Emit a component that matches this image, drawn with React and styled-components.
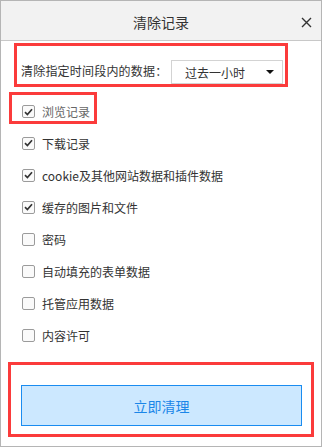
import styled, { createGlobalStyle } from 'styled-components';

const GlobalStyle = createGlobalStyle`
  html, body {
    margin: 0;
    padding: 0;
    background: #fff;
  }
  body {
    font-family: 'Noto Sans CJK SC', 'Noto Sans', sans-serif;
    color: #333;
  }
`;

const items = [
  { label: '浏览记录', checked: true, marked: true },
  { label: '下载记录', checked: true },
  { label: 'cookie及其他网站数据和插件数据', checked: true },
  { label: '缓存的图片和文件', checked: true },
  { label: '密码', checked: false },
  { label: '自动填充的表单数据', checked: false },
  { label: '托管应用数据', checked: false },
  { label: '内容许可', checked: false },
];

const CheckMark = () => (
  <svg width='9' height='8' viewBox='0 0 9 8'>
    <path d='M1 4.2 L3.4 6.5 L8 1.3' fill='none' stroke='#333' strokeWidth='1.7' />
  </svg>
);

const Option = ({ label, checked, marked }) => (
  <Row>
    <Box>{checked && <CheckMark />}</Box>
    <Label $muted={marked}>{label}</Label>
  </Row>
);

const App = () => {
  const marked = items.filter((item) => item.marked);
  const rest = items.filter((item) => !item.marked);

  return (
    <>
      <GlobalStyle />
      <Dialog>
        <Header>
          <Title>清除记录</Title>
          <Close aria-label='close'>
            <svg width='11' height='11' viewBox='0 0 11 11'>
              <path d='M1 1 L10 10 M10 1 L1 10' stroke='#333' strokeWidth='1.4' />
            </svg>
          </Close>
        </Header>

        <RangeBox>
          <RangeLabel>清除指定时间段内的数据：</RangeLabel>
          <Select>
            <span>过去一小时</span>
            <Arrow />
          </Select>
        </RangeBox>

        {marked.map((item) => (
          <MarkedRow key={item.label}>
            <Option {...item} />
          </MarkedRow>
        ))}

        <List>
          {rest.map((item) => (
            <Option key={item.label} {...item} />
          ))}
        </List>

        <Footer>
          <ClearButton>立即清理</ClearButton>
        </Footer>
      </Dialog>
    </>
  );
};

const Dialog = styled.div`
  width: 322px;
  height: 447px;
  box-sizing: border-box;
  border: 1px solid #b5b5b5;
  display: flex;
  flex-direction: column;
  background: #fff;
`;

const Header = styled.div`
  height: 40px;
  box-sizing: border-box;
  background: #f2f2f2;
  border-bottom: 1px solid #c8c8c8;
  display: flex;
  align-items: center;
  justify-content: center;
  position: relative;
`;

const Title = styled.div`
  font-size: 14px;
  color: #333;
  padding-top: 3px;
`;

const Close = styled.div`
  position: absolute;
  right: 9px;
  top: 16px;
  width: 11px;
  height: 11px;
  display: flex;
`;

const RangeBox = styled.div`
  margin: 2px 0 0 13px;
  width: 274px;
  height: 44px;
  box-sizing: border-box;
  border: 3px solid #fb3b3b;
  display: flex;
  align-items: flex-end;
  justify-content: space-between;
  padding: 0 2px 0 4px;
`;

const RangeLabel = styled.span`
  font-size: 12px;
  color: #333;
  line-height: 24px;
  margin-bottom: 1px;
  letter-spacing: 0.2px;
`;

const Select = styled.div`
  width: 112px;
  height: 24px;
  box-sizing: border-box;
  border: 1px solid #d3d3d3;
  background: #fff;
  display: flex;
  align-items: center;
  justify-content: space-between;
  padding: 0 8px 0 13px;
  font-size: 12px;
  color: #333;
`;

const Arrow = styled.span`
  width: 0;
  height: 0;
  border-left: 4px solid transparent;
  border-right: 4px solid transparent;
  border-top: 4px solid #111;
`;

const MarkedRow = styled.div`
  margin: 5px 0 0 8px;
  width: 88px;
  height: 32px;
  box-sizing: border-box;
  border: 3px solid #fb3b3b;
  padding: 7px 0 0 10px;
  display: flex;
`;

const List = styled.div`
  margin-top: 3px;
  display: flex;
  flex-direction: column;
`;

const Row = styled.div`
  height: 32px;
  display: flex;
  align-items: center;
  gap: 7px;
  padding-left: 21px;
  ${MarkedRow} & {
    height: 19px;
    padding-left: 0;
  }
`;

const Box = styled.span`
  width: 13px;
  height: 13px;
  box-sizing: border-box;
  border: 1px solid #9b9b9b;
  border-radius: 2px;
  background: #fafafa;
  display: flex;
  align-items: center;
  justify-content: center;
  flex-shrink: 0;
`;

const Label = styled.span`
  font-size: 12px;
  color: ${(p) => (p.$muted ? '#666' : '#333')};
  white-space: nowrap;
`;

const Footer = styled.div`
  margin: 11px 0 0 7px;
  width: 306px;
  height: 75px;
  box-sizing: border-box;
  border: 3px solid #fb3b3b;
  padding: 20px 0 0 10px;
`;

const ClearButton = styled.button`
  width: 281px;
  height: 41px;
  box-sizing: border-box;
  border: 1px solid #1a8cf0;
  background: #cce8ff;
  color: #1a86e8;
  font-family: 'Noto Sans CJK SC', 'Noto Sans', sans-serif;
  font-size: 14px;
  padding: 0;
  cursor: pointer;
`;

export default App;
